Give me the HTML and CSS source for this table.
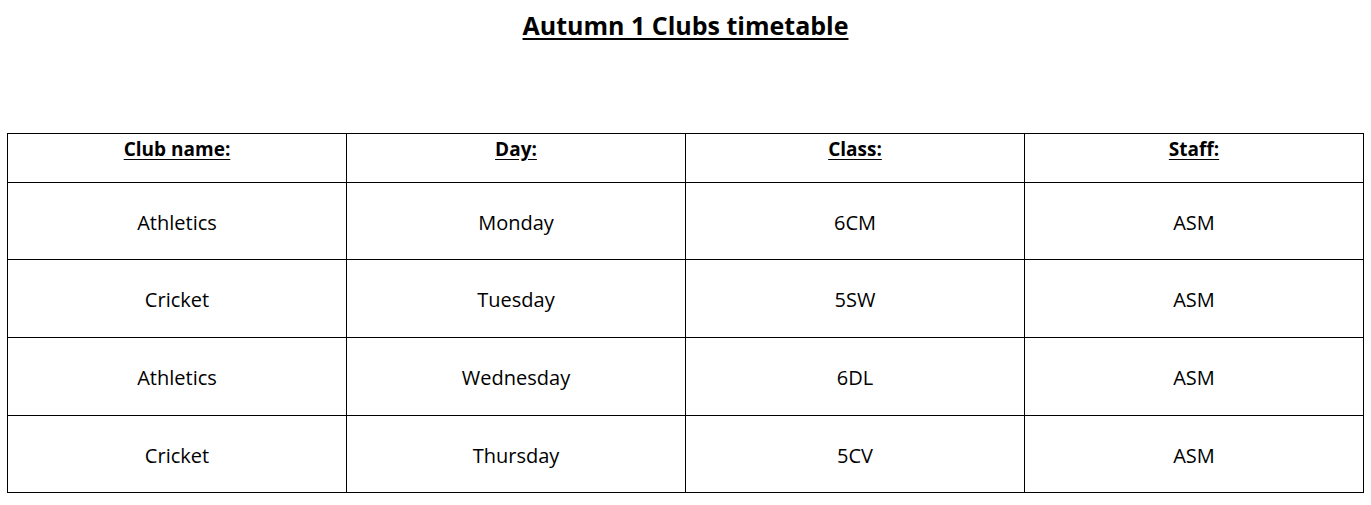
FILE: index.html
```html
<!DOCTYPE html>
<html>
<head>
<meta charset="utf-8">
<link rel="stylesheet" href="styles.css">
</head>
<body>
<h1 class="title">Autumn 1 Clubs timetable</h1>
<table class="timetable">
  <thead>
    <tr><th>Club name:</th><th>Day:</th><th>Class:</th><th>Staff:</th></tr>
  </thead>
  <tbody>
    <tr><td>Athletics</td><td>Monday</td><td>6CM</td><td>ASM</td></tr>
    <tr class="tall"><td>Cricket</td><td>Tuesday</td><td>5SW</td><td>ASM</td></tr>
    <tr class="tall"><td>Athletics</td><td>Wednesday</td><td>6DL</td><td>ASM</td></tr>
    <tr><td>Cricket</td><td>Thursday</td><td>5CV</td><td>ASM</td></tr>
  </tbody>
</table>
</body>
</html>
```
FILE: styles.css
```css
html, body {
  margin: 0;
  padding: 0;
  background: #fff;
}
body {
  font-family: "Open Sans", "Noto Sans", sans-serif;
  color: #000;
}
.title {
  margin: 0;
  padding-top: 8px;
  height: 42px;
  font-size: 25px;
  line-height: 34px;
  font-weight: 700;
  text-align: center;
  text-decoration: underline;
  text-decoration-thickness: 2px;
  text-underline-offset: 3px;
  margin-bottom: 83px;
}
.timetable {
  margin-left: 7px;
  width: 1357px;
  border-collapse: collapse;
  table-layout: fixed;
}
.timetable th, .timetable td {
  border: 1px solid #000;
  text-align: center;
  padding: 0;
}
.timetable th {
  height: 48px;
  vertical-align: top;
  font-size: 19px;
  font-weight: 700;
  line-height: 30px;
  text-decoration: underline;
  text-underline-offset: 3px;
}
.timetable td {
  height: 74px;
  padding-top: 2px;
  vertical-align: middle;
  font-size: 20px;
}
.timetable tr.tall td {
  height: 75px;
}
```
